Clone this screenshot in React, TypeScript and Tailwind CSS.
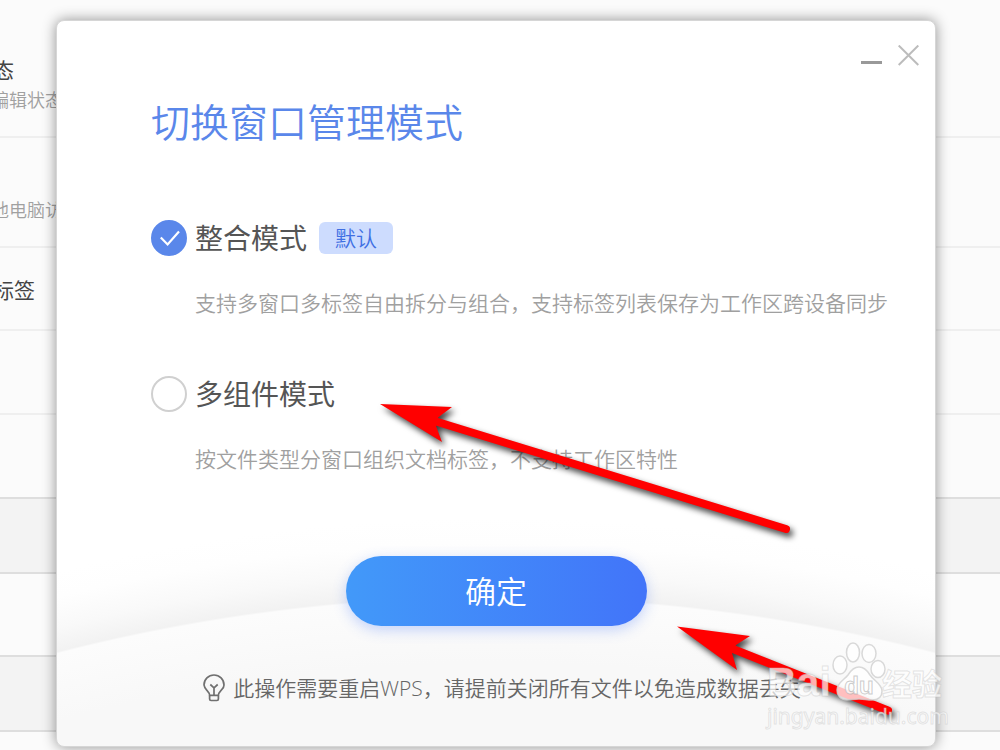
import { useState } from "react"
import type { ReactNode } from "react"

interface ModeOptionProps {
  value: string
  title: string
  description: string
  checked: boolean
  onSelect: (value: string) => void
  badge?: string
}

interface SettingRowProps {
  className: string
  children?: ReactNode
}

const SettingRow = ({ className, children }: SettingRowProps) => (
  <section
    className={`overflow-hidden whitespace-nowrap border-b-2 ${className}`}
  >
    {children}
  </section>
)

const SettingsPage = () => (
  <div className="flex min-h-screen flex-col bg-[#fbfbfb]">
    <SettingRow className="h-[138px] border-[#efefef] pt-14">
      <h2 className="-ml-[7px] text-[21px] leading-7 text-[#444444]">态</h2>
      <p className="-ml-[9px] mt-1 text-[18px] font-[350] leading-6 text-[#a0a0a0]">
        编辑状态
      </p>
    </SettingRow>
    <SettingRow className="h-[110px] border-[#efefef] pt-[60px]">
      <p className="-ml-[9px] text-[18px] font-[350] leading-6 text-[#a0a0a0]">
        他电脑访
      </p>
    </SettingRow>
    <SettingRow className="h-[83px] border-[#efefef] pt-7">
      <h2 className="-ml-[7px] text-[21px] leading-7 text-[#444444]">标签</h2>
    </SettingRow>
    <SettingRow className="h-[84px] border-[#efefef]" />
    <SettingRow className="h-[84px] border-[#dedede]" />
    <SettingRow className="h-[75px] border-[#dedede] bg-[#f3f3f3]" />
    <SettingRow className="h-[83px] border-[#dedede]" />
    <SettingRow className="h-[75px] border-[#dedede] bg-[#f3f3f3]" />
  </div>
)

const ModeOption = ({
  value,
  title,
  description,
  checked,
  onSelect,
  badge,
}: ModeOptionProps) => (
  <div>
    <div className="flex h-9 items-center gap-2">
      <span className="grid size-9 shrink-0">
        <input
          id={`mode-${value}`}
          type="radio"
          name="window-mode"
          value={value}
          checked={checked}
          onChange={() => onSelect(value)}
          aria-describedby={`mode-${value}-description`}
          className="peer col-start-1 row-start-1 size-9 appearance-none rounded-full border-2 border-[#d0d0d0] bg-white checked:border-[#5a87ea] checked:bg-[#5a87ea]"
        />
        <svg
          viewBox="0 0 36 36"
          aria-hidden="true"
          className="pointer-events-none col-start-1 row-start-1 hidden size-9 peer-checked:block"
        >
          <path
            d="M9.8 17.4 16.6 24.4 28 11.4"
            fill="none"
            stroke="#ffffff"
            strokeWidth="2.2"
          />
        </svg>
      </span>
      <label
        htmlFor={`mode-${value}`}
        className="text-[28px] leading-9 text-[#555555]"
      >
        {title}
      </label>
      {badge && (
        <span className="ml-1 rounded-md bg-[#cddcfe] px-4 text-[21px] font-[350] leading-8 text-[#3f6fe3]">
          {badge}
        </span>
      )}
    </div>
    <p
      id={`mode-${value}-description`}
      className="mt-[33px] whitespace-nowrap pl-11 text-[21px] font-[350] leading-7 text-[#a0a0a0]"
    >
      {description}
    </p>
  </div>
)

const BulbIcon = () => (
  <svg
    viewBox="0 0 22 28"
    aria-hidden="true"
    className="h-7 w-[22px] shrink-0"
    fill="none"
    stroke="#707070"
    strokeWidth="1.7"
    strokeLinejoin="round"
  >
    <path d="M6.6 21.4c0-2.6-1.4-3.6-2.9-5.2A9.9 9.9 0 0 1 1 10.9a10 9.9 0 0 1 20 0c0 2.2-1.1 3.9-2.7 5.3-1.5 1.6-2.9 2.6-2.9 5.2Z" />
    <path d="M6.6 21.4v3.6q0 1.5 1.5 1.5h5.8q1.5 0 1.5-1.5v-3.6" />
    <path d="M7.3 10.5 11 13.8l3.7-3.3M11 13.8v7.6" />
  </svg>
)

const ModeDialog = () => {
  const [mode, setMode] = useState("integrated")

  return (
    <div
      role="dialog"
      aria-labelledby="dialog-title"
      className="flex w-full flex-col rounded-lg border border-[#d6d6d6] bg-white bg-[radial-gradient(circle_at_50%_2332px,#f8f8f8_1690px,#fcfcfc_1755px,#f2f2f2_1757px,#f9f9f9_1780px,#fefefe_1810px,#ffffff_1835px)] shadow-[0_0_14px_rgba(0,0,0,0.42)]"
    >
      <div className="flex justify-end gap-4 pr-4 pt-6">
        <button
          type="button"
          aria-label="最小化"
          className="flex h-[22px] w-[21px] items-end pb-[3px]"
        >
          <span className="h-[3px] w-full bg-[#999999]" />
        </button>
        <button type="button" aria-label="关闭" className="h-[22px] w-[21px]">
          <svg viewBox="0 0 21 22" className="h-[22px] w-[21px]">
            <path
              d="M.7.5 20.3 20M20.3.5.7 20"
              stroke="#bcbcbc"
              strokeWidth="2"
            />
          </svg>
        </button>
      </div>

      <h1
        id="dialog-title"
        className="mt-[31px] pl-[94px] text-[39px] font-[350] leading-[48px] text-[#5a87ea]"
      >
        切换窗口管理模式
      </h1>

      <form
        className="flex flex-col pt-[74px]"
        onSubmit={(event) => event.preventDefault()}
      >
        <fieldset
          aria-label="窗口管理模式"
          className="flex flex-col gap-[59px] pl-[94px]"
        >
          <ModeOption
            value="integrated"
            title="整合模式"
            badge="默认"
            description="支持多窗口多标签自由拆分与组合，支持标签列表保存为工作区跨设备同步"
            checked={mode === "integrated"}
            onSelect={setMode}
          />
          <ModeOption
            value="components"
            title="多组件模式"
            description="按文件类型分窗口组织文档标签，不支持工作区特性"
            checked={mode === "components"}
            onSelect={setMode}
          />
        </fieldset>

        <button
          type="submit"
          className="mt-[83px] h-[70px] w-[301px] self-center rounded-full bg-linear-to-r from-[#4299f9] to-[#4274f9] text-[31px] font-[350] text-white shadow-[0_4px_14px_rgba(66,116,249,0.3)]"
        >
          确定
        </button>
      </form>

      <p className="mt-12 flex items-center justify-center gap-2 whitespace-nowrap pl-3 text-[21px] font-[350] leading-7 text-[#666666]">
        <BulbIcon />
        此操作需要重启WPS，请提前关闭所有文件以免造成数据丢失
      </p>
    </div>
  )
}

const Arrows = () => (
  <>
    <svg
      viewBox="370 395 440 155"
      aria-hidden="true"
      className="pointer-events-none absolute left-[370px] top-[395px] h-[155px] w-[440px] drop-shadow-[3px_4px_3px_rgba(0,0,0,0.75)]"
    >
      <path d="M380 404 452 407 438 417.5 436 426 442 442Z" fill="#ff0000" />
      <path
        d="M436 421.5 786 529"
        stroke="#ff0000"
        strokeWidth="8"
        strokeLinecap="round"
      />
    </svg>
    <svg
      viewBox="670 615 240 115"
      aria-hidden="true"
      className="pointer-events-none absolute left-[670px] top-[615px] h-[115px] w-[240px] drop-shadow-[3px_4px_3px_rgba(0,0,0,0.75)]"
    >
      <path d="M677 626.5 750 636 736 645 732 653 737 670Z" fill="#ff0000" />
      <path
        d="M733 649 888 710.5"
        stroke="#ff0000"
        strokeWidth="8"
        strokeLinecap="round"
      />
    </svg>
  </>
)

const Watermark = () => (
  <div className="pointer-events-none absolute left-[767px] top-[640px] flex flex-col whitespace-nowrap text-white/70 [-webkit-text-stroke:1px_rgba(190,190,190,0.4)]">
    <div className="flex h-[62px] items-end">
      <span className="w-[65px] font-['Liberation_Sans',sans-serif] text-[41px] font-bold leading-10">
        Bai
      </span>
      <div className="grid h-[62px] w-[50px] items-end justify-items-center">
        <svg
          viewBox="0 0 54 62"
          aria-hidden="true"
          className="col-start-1 row-start-1 h-[62px] w-[54px]"
          fill="#ffffff"
          fillOpacity="0.75"
          stroke="#d0d0d0"
          strokeWidth="1.5"
          strokeOpacity="0.8"
        >
          <ellipse cx="8" cy="25" rx="7" ry="9" />
          <ellipse cx="21" cy="12.5" rx="6.5" ry="9.5" />
          <ellipse cx="37" cy="13.5" rx="7" ry="9" />
          <ellipse cx="46" cy="29" rx="7" ry="8.5" />
          <path d="M27 27c5 0 8 3 11 8 4 6 12 9 12 16 0 6-4 9-10 9-5 0-8-1-13-1s-8 1-12 1c-7 0-10-5-10-10 0-7 7-10 11-15 3-5 6-8 11-8Z" />
        </svg>
        <span className="col-start-1 row-start-1 font-['Liberation_Sans',sans-serif] text-[24px] font-bold leading-8 [-webkit-text-stroke:1px_rgba(170,170,170,0.6)]">
          du
        </span>
      </div>
      <span className="text-[30px] font-bold leading-9">经验</span>
    </div>
    <span className="font-['Noto_Sans',sans-serif] text-[21px] leading-7">
      jingyan.baidu.com
    </span>
  </div>
)

export default function App() {
  return (
    <main className="relative min-h-screen overflow-hidden font-['Open_Sans','Noto_Sans_CJK_SC',sans-serif]">
      <SettingsPage />
      <div className="absolute inset-0 flex pb-[3px] pl-14 pr-16 pt-5">
        <ModeDialog />
      </div>
      <Arrows />
      <Watermark />
    </main>
  )
}
